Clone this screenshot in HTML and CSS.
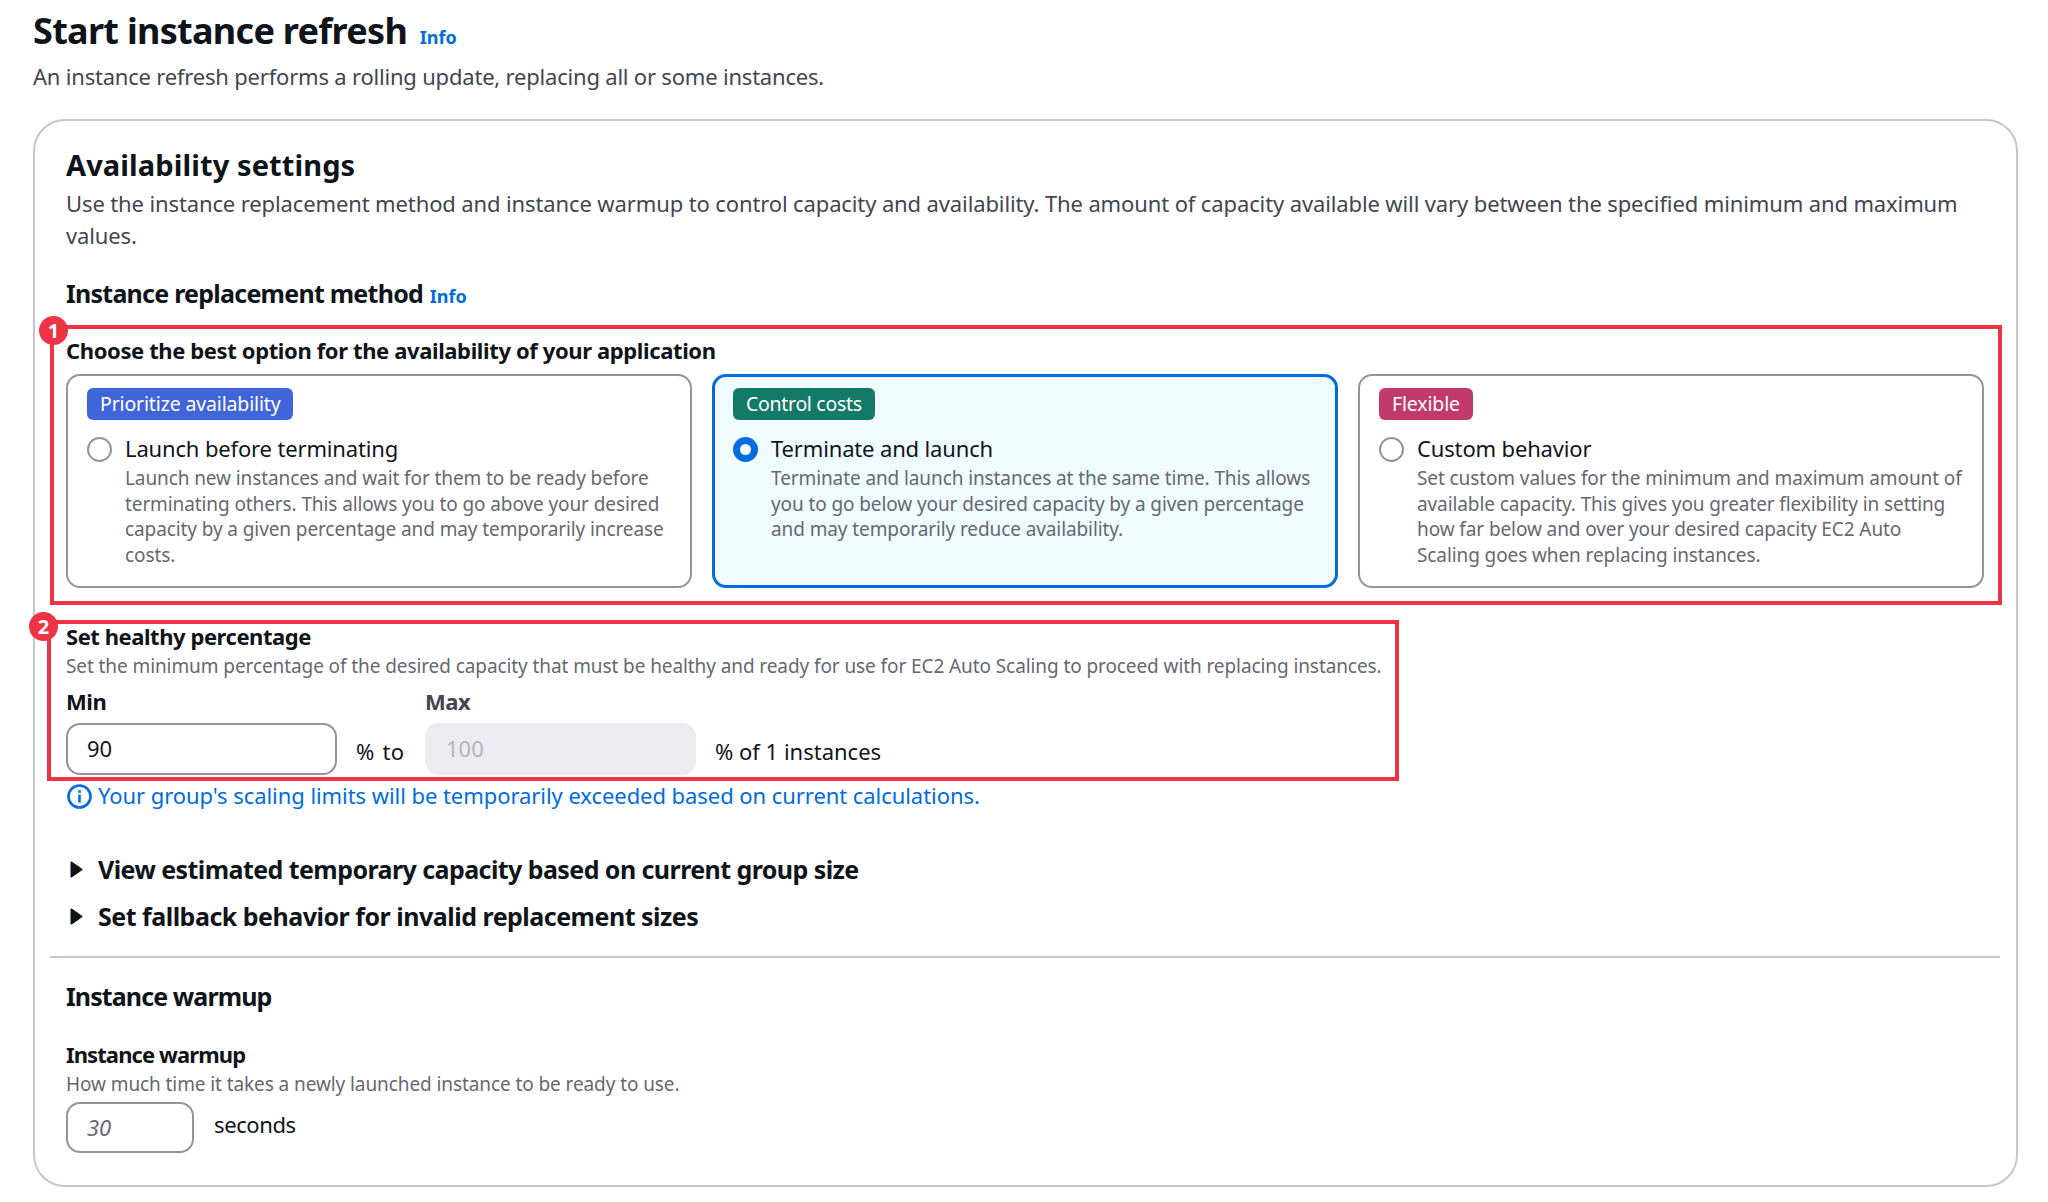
FILE: index.html
```html
<!DOCTYPE html>
<html lang="en">
<head>
<meta charset="utf-8">
<title>Start instance refresh</title>
<link rel="stylesheet" href="styles.css">
</head>
<body>
<main class="page">
  <header class="page-head">
    <h1 class="title">Start instance refresh <a class="info info-lg">Info</a></h1>
    <p class="subtitle">An instance refresh performs a rolling update, replacing all or some instances.</p>
  </header>
  <section class="panel">
    <h2 class="panel-title">Availability settings</h2>
    <p class="panel-desc">Use the instance replacement method and instance warmup to control capacity and availability. The amount of capacity available will vary between the specified minimum and maximum values.</p>
    <h3 class="method-title">Instance replacement method <a class="info info-method">Info</a></h3>

    <div class="mark mark-wide">
      <span class="step step-one">1</span>
      <div class="label choose">Choose the best option for the availability of your application</div>
      <div class="options">
        <div class="option">
          <span class="badge badge-blue">Prioritize availability</span>
          <div class="radio-row"><span class="radio"></span><span class="radio-label">Launch before terminating</span></div>
          <p class="option-desc">Launch new instances and wait for them to be ready before terminating others. This allows you to go above your desired capacity by a given percentage and may temporarily increase costs.</p>
        </div>
        <div class="option option-on">
          <span class="badge badge-green">Control costs</span>
          <div class="radio-row"><span class="radio radio-on"></span><span class="radio-label">Terminate and launch</span></div>
          <p class="option-desc">Terminate and launch instances at the same time. This allows you to go below your desired capacity by a given percentage and may temporarily reduce availability.</p>
        </div>
        <div class="option">
          <span class="badge badge-pink">Flexible</span>
          <div class="radio-row"><span class="radio"></span><span class="radio-label">Custom behavior</span></div>
          <p class="option-desc">Set custom values for the minimum and maximum amount of available capacity. This gives you greater flexibility in setting how far below and over your desired capacity EC2 Auto Scaling goes when replacing instances.</p>
        </div>
      </div>
    </div>

    <div class="mark mark-narrow">
      <span class="step step-two">2</span>
      <div class="label healthy">Set healthy percentage</div>
      <div class="hint hint-first">Set the minimum percentage of the desired capacity that must be healthy and ready for use for EC2 Auto Scaling to proceed with replacing instances.</div>
      <div class="range">
        <div class="field">
          <div class="label field-label">Min</div>
          <div class="input">90</div>
        </div>
        <span class="unit unit-to">% to</span>
        <div class="field">
          <div class="label field-label field-label-muted">Max</div>
          <div class="input input-off">100</div>
        </div>
        <span class="unit unit-of">% of 1 instances</span>
      </div>
    </div>

    <div class="notice">
      <svg class="notice-icon" viewBox="0 0 25 25" aria-hidden="true"><circle cx="12.5" cy="12.5" r="11" fill="none" stroke="currentColor" stroke-width="2.6"/><rect x="11.2" y="10.6" width="2.6" height="8" fill="currentColor"/><rect x="11.2" y="6.2" width="2.6" height="2.6" fill="currentColor"/></svg>
      <span class="notice-text">Your group's scaling limits will be temporarily exceeded based on current calculations.</span>
    </div>

    <div class="expander expander-first"><svg class="caret" viewBox="0 0 13 17" aria-hidden="true"><path d="M1.5 1.5 L11.5 8.5 L1.5 15.5 Z" fill="currentColor" stroke="currentColor" stroke-width="2" stroke-linejoin="round"/></svg>View estimated temporary capacity based on current group size</div>
    <div class="expander expander-second"><svg class="caret" viewBox="0 0 13 17" aria-hidden="true"><path d="M1.5 1.5 L11.5 8.5 L1.5 15.5 Z" fill="currentColor" stroke="currentColor" stroke-width="2" stroke-linejoin="round"/></svg>Set fallback behavior for invalid replacement sizes</div>

    <hr class="divider">

    <h3 class="warmup-title">Instance warmup</h3>
    <div class="label warmup-label">Instance warmup</div>
    <div class="hint warmup-hint">How much time it takes a newly launched instance to be ready to use.</div>
    <div class="warmup-row">
      <div class="input input-small">30</div>
      <span class="seconds">seconds</span>
    </div>
  </section>
</main>
</body>
</html>
```
FILE: styles.css
```css
* { box-sizing: border-box; }
html, body { margin: 0; padding: 0; background: #fff; }
body { font-family: "Noto Sans", "Open Sans", sans-serif; color: #0f141a; width: 2048px; height: 1202px; overflow: hidden; }
h1, h2, h3, p { margin: 0; }

.page { padding: 9px 30px 0 33px; }
.title { font-size: 36px; line-height: 44px; font-weight: 700; letter-spacing: -0.7px; }
.info { color: #006ce0; font-size: 18px; line-height: 1; font-weight: 700; letter-spacing: 0; }
.info-lg { margin-left: 4px; }
.info-method { margin-left: 1px; }
.subtitle { margin-top: 7px; font-size: 22px; line-height: 32px; color: #424650; letter-spacing: -0.2px; }

.panel { margin-top: 27px; height: 1068px; border: 2px solid #c6c6cd; border-radius: 32px; padding: 24px 32px 0 31px; }
.panel-title { font-size: 29px; line-height: 40px; font-weight: 700; letter-spacing: 0.1px; }
.panel-desc { margin-top: 2px; font-size: 22px; line-height: 32px; color: #424650; letter-spacing: -0.12px; }
.method-title { margin-top: 24px; font-size: 25px; line-height: 36px; font-weight: 700; letter-spacing: -0.75px; }

.mark { position: relative; border: 4px solid #ee3344; }
.mark-wide { margin: 14px -18px 0 -16px; height: 280px; padding: 7px 14px 0 12px; }
.mark-narrow { margin: 15px 0 0 -19px; width: 1352px; height: 161px; padding: 0 0 0 15px; }
.step { position: absolute; width: 29px; height: 29px; border-radius: 50%; background: #ee3344; color: #fff; font-size: 20px; line-height: 29px; font-weight: 700; text-align: center; }
.step-one { left: -15px; top: -13px; }
.step-two { left: -22px; top: -12px; }

.label { font-size: 22px; line-height: 26px; font-weight: 700; letter-spacing: -0.45px; }
.choose { line-height: 28px; letter-spacing: -0.38px; }
.healthy { line-height: 24px; }
.options { margin-top: 10px; display: grid; grid-template-columns: repeat(3, 1fr); gap: 20px; height: 214px; }
.option { border: 2px solid #949499; border-radius: 14px; padding: 12px 16px 0 19px; }
.option-on { border: 3px solid #006ce0; background: #f0fbff; padding: 11px 15px 0 18px; }
.badge { display: inline-block; height: 32px; line-height: 32px; padding: 0 13px; border-radius: 6px; color: #fff; font-size: 19.5px; letter-spacing: -0.15px; vertical-align: top; }
.badge-blue { background: #4065d8; }
.badge-green { background: #147a68; letter-spacing: -0.3px; }
.badge-pink { background: #c23a6b; }
.radio-row { margin-top: 14px; display: flex; align-items: center; height: 30px; }
.radio { width: 25px; height: 25px; border-radius: 50%; border: 2px solid #949499; background: #fff; flex: none; }
.radio-on { border: 7.5px solid #006ce0; }
.radio-label { margin: -2px 0 0 13px; font-size: 22px; line-height: 30px; letter-spacing: -0.15px; }
.option-desc { margin: 2px 0 0 38px; font-size: 19px; line-height: 25.7px; color: #656871; letter-spacing: -0.1px; }

.hint { font-size: 19px; line-height: 26px; color: #656871; letter-spacing: -0.09px; }
.hint-first { margin-top: 5px; white-space: nowrap; }
.range { margin-top: 9px; display: flex; align-items: flex-start; }
.field { width: 271px; }
.field-label { margin-bottom: 9px; }
.field-label-muted { color: #424650; }
.input { height: 52px; border: 2px solid #949499; border-radius: 14px; padding-left: 19px; font-size: 22px; line-height: 46px; }
.input-off { background: #ebebf0; border-color: #ebebf0; color: #b4b4bb; }
.unit { font-size: 22px; line-height: 32px; margin-top: 47px; }
.unit-to { width: 88px; padding-left: 19px; word-spacing: 2px; letter-spacing: 0.3px; }
.unit-of { margin-left: 19px; }

.notice { display: flex; align-items: center; color: #006ce0; font-size: 22px; line-height: 32px; letter-spacing: -0.06px; }
.notice-icon { width: 25px; height: 25px; margin: 0 6px 0 1px; flex: none; }
.notice-text { margin-top: -2px; }

.expander { display: flex; align-items: center; font-size: 25px; line-height: 36px; font-weight: 700; letter-spacing: -0.5px; }
.expander-first { margin-top: 40px; letter-spacing: -0.57px; }
.expander-second { margin-top: 11px; }
.caret { width: 13px; height: 17px; margin: 0 15px 0 4px; flex: none; }

.divider { margin: 22px -16px 0 -16px; border: 0; height: 2px; background: #c6c6cd; }
.warmup-title { margin-top: 21px; font-size: 25px; line-height: 34px; font-weight: 700; letter-spacing: -0.9px; }
.warmup-label { margin-top: 28px; letter-spacing: -0.9px; }
.warmup-hint { margin-top: 4px; }
.warmup-row { margin-top: 5px; display: flex; align-items: flex-start; }
.input-small { width: 128px; height: 51px; font-style: italic; color: #656871; }
.seconds { margin-left: 20px; margin-top: 6px; font-size: 22px; line-height: 32px; letter-spacing: -0.4px; }
```
